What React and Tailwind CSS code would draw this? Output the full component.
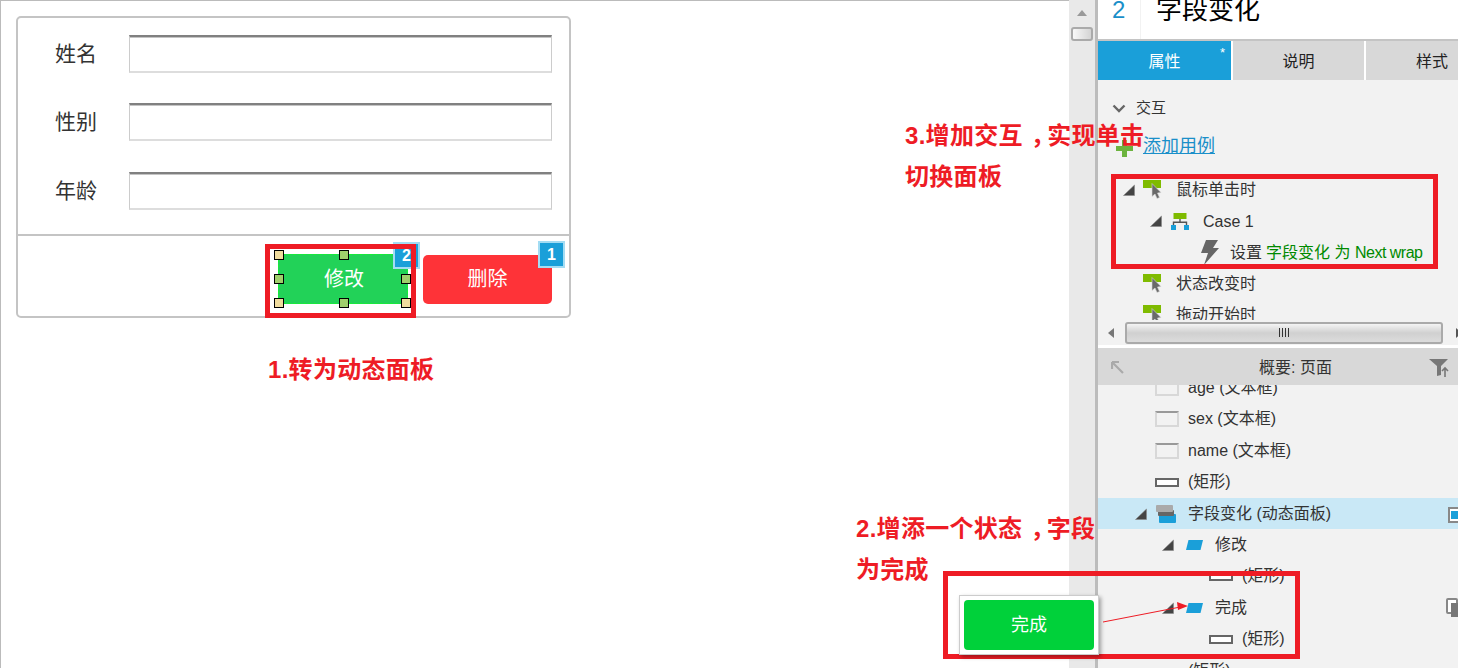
const font = { fontFamily: '"Liberation Sans","Noto Sans CJK SC",sans-serif' };

function Tri({ className = "" }) {
  return (
    <svg width="12" height="12" viewBox="0 0 12 12" className={"shrink-0 " + className}>
      <path d="M11.5 1 L11.5 11.5 L0.5 11.5 Z" fill="#444" stroke="#888" strokeWidth="0.6" />
    </svg>
  );
}
function EventIcon({ className = "" }) {
  return (
    <svg width="19" height="19" viewBox="0 0 19 19" className={"shrink-0 " + className}>
      <rect x="0" y="0" width="18" height="8" fill="#7fbb00" />
      <path d="M9 3.5L18 12.5L14.5 13L16.5 17.5L14 18.5L12 14L9 16.5Z" fill="#6a6a6a" stroke="#d8d8d8" strokeWidth="0.6" />
    </svg>
  );
}
function CaseIcon({ className = "" }) {
  return (
    <svg width="18" height="17" viewBox="0 0 18 17" className={"shrink-0 " + className}>
      <rect x="2.5" y="0" width="13" height="6" fill="#7fbb00" />
      <path d="M9 6V9M2.5 12V9.2H15.5V12" fill="none" stroke="#555" strokeWidth="1.4" />
      <rect x="0" y="12" width="5" height="5" fill="#1a9fd9" />
      <rect x="13" y="12" width="5" height="5" fill="#1a9fd9" />
    </svg>
  );
}
function Bolt({ className = "" }) {
  return (
    <svg width="20" height="25" viewBox="0 0 20 25" className={"shrink-0 " + className}>
      <path d="M6 0H18L13 8H19L4 25L8 13H1Z" fill="#666" />
    </svg>
  );
}
function TextBoxIcon({ faint }) {
  return (
    <div className={"w-[24px] h-[16px] shrink-0 border-2 bg-[#f2f2f2] " + (faint ? "border-[#d8d8d8]" : "border-[#d8d8d8] border-t-[#999]")} />
  );
}
function RectIcon() {
  return <div className="w-[24px] h-[9px] shrink-0 border-2 border-[#666] bg-white" />;
}
function StateIcon() {
  return (
    <svg width="17" height="10" viewBox="0 0 17 10" className="shrink-0">
      <path d="M2.5 0H17L14.5 10H0Z" fill="#1a9fd9" />
    </svg>
  );
}
function PanelIcon() {
  return (
    <svg width="20" height="18" viewBox="0 0 20 18" className="shrink-0">
      <rect x="3" y="9" width="17" height="9" rx="1" fill="#1a9fd9" />
      <rect x="2" y="5" width="16" height="6" rx="1" fill="#666" />
      <rect x="0" y="0" width="17" height="7" rx="1" fill="#aaa" />
    </svg>
  );
}

function Field({ label, className = "" }) {
  return (
    <div className={"flex items-center " + className}>
      <span className="w-[82px] pl-[8px] text-[21px] leading-[26px] text-[#333]">{label}</span>
      <div className="w-[423px] h-[38px] bg-white border border-[#ccc] border-b-2 border-b-[#ddd] border-t-2 border-t-[#808080] shadow-[inset_0_1px_0_#c4c4c4]" />
    </div>
  );
}

function Handle({ className }) {
  return <div className={"absolute w-[10px] h-[10px] border-[1.5px] border-black bg-[#a0cf6c] " + className} />;
}

function Badge({ n, className }) {
  return (
    <div className={"absolute w-[27px] h-[27px] bg-[#1a9fd9] border-2 border-[#a3dcf3] text-white font-bold text-[16px] leading-[23px] text-center " + className}>{n}</div>
  );
}

function Form() {
  return (
    <div className="w-[555px] h-[302px] rounded-[5px] border-2 border-[#c4c4c4] bg-white flex flex-col">
      <div className="h-[218px] border-b-2 border-[#c4c4c4] pl-[29px] pt-[17px]">
        <Field label="姓名" />
        <Field label="性别" className="mt-[30px]" />
        <Field label="年龄" className="mt-[31px]" />
      </div>
      <div className="flex-1 flex justify-end items-start pt-[18px] pr-[17px] gap-[15px]">
        <div className="relative w-[130px] h-[50px] bg-[#22d258] border border-dashed border-[#14f52e] text-white text-[20px] leading-[48px] text-center">
          <span className="ml-[2px]">修改</span>
          <Handle className="-left-[5px] -top-[5px] bg-[#f0dc9e]" />
          <Handle className="left-[60px] -top-[5px]" />
          <Handle className="-right-[4px] -top-[5px]" />
          <Handle className="-left-[5px] top-[19px]" />
          <Handle className="-right-[4px] top-[19px]" />
          <Handle className="-left-[5px] -bottom-[5px] bg-[#f0dc9e]" />
          <Handle className="left-[60px] -bottom-[5px]" />
          <Handle className="-right-[4px] -bottom-[5px] bg-[#f0dc9e]" />
          <Badge n="2" className="-top-[13px] -right-[13px]" />
        </div>
        <div className="relative w-[129px] h-[49px] mt-[1px] bg-[#fe3338] rounded-[5px] text-white text-[20px] leading-[49px] text-center">
          删除
          <Badge n="1" className="-top-[14px] -right-[13px]" />
        </div>
      </div>
    </div>
  );
}

function Tab({ active, w, children }) {
  return (
    <div className={"h-full relative shrink-0 text-[16px] pt-[2px] flex items-center justify-center " + w + " " + (active ? "bg-[#1a9fd9] text-white" : "bg-[#d8d8d8] text-[#222]")}>
      {children}
    </div>
  );
}

function EvRow({ pl, children, h = "h-[31px]" }) {
  return <div className={"flex items-center text-[16px] text-[#333] whitespace-nowrap " + h} style={{ paddingLeft: pl }}>{children}</div>;
}

function TreeRow({ pl, children, active }) {
  return (
    <div className={"h-[31.4px] shrink-0 flex items-center relative text-[16px] text-[#333] whitespace-nowrap " + (active ? "bg-[#c9e8f6]" : "")} style={{ paddingLeft: pl }}>
      {children}
    </div>
  );
}

function RedBox({ className }) {
  return <div className={"absolute border-[5px] border-[#ee1c25] pointer-events-none " + className} />;
}

function Note({ className, children }) {
  return <div className={"absolute text-[24px] font-bold leading-[32px] tracking-[0.3px] text-[#ee1c25] whitespace-nowrap " + className}>{children}</div>;
}

export default function App() {
  return (
    <div className="relative w-[1458px] h-[668px] overflow-hidden flex bg-white" style={font}>
      {/* canvas */}
      <div className="w-[1069px] h-full shrink-0 border-t border-l border-[#bbb] pl-[15px] pt-[15px]">
        <Form />
      </div>

      {/* vertical scrollbar */}
      <div className="w-[26px] h-full shrink-0 bg-[#e9e9e9] flex flex-col items-center pt-[10px]">
        <svg width="10" height="6" viewBox="0 0 10 6"><path d="M5 0L10 6H0Z" fill="#999" /></svg>
        <div className="mt-[11px] w-[22px] h-[14px] rounded-[3px] border-2 border-[#aaa] bg-gradient-to-r from-[#f8f8f8] to-[#d4d4d4]" />
      </div>
      <div className="w-[3px] h-full shrink-0 bg-[#bcbcbc]" />

      {/* right panel */}
      <div className="flex-1 min-w-0 h-full flex flex-col bg-[#f2f2f2] overflow-hidden">
        <div className="h-[39px] shrink-0 bg-white flex overflow-hidden">
          <div className="w-[43px] h-full border-r border-[#f2f2f2] pl-[14px] text-[24px] leading-[20px] text-[#1a8fc9]">2</div>
          <div className="pl-[15px] text-[26px] leading-[20px] text-black">字段变化</div>
        </div>
        <div className="h-[2px] shrink-0 bg-[#c4c4c4]" />
        <div className="h-[39px] shrink-0 flex gap-[2px] bg-white">
          <Tab active w="w-[133px]">
            属性
            <span className="absolute right-[6px] top-[4px] text-[13px] leading-[16px]">*</span>
          </Tab>
          <Tab w="w-[131px]">说明</Tab>
          <Tab w="w-[132px]">样式</Tab>
        </div>

        <div className="h-[240px] shrink-0 overflow-hidden">
          <div className="h-[56px] flex items-center pl-[14px] text-[15px] text-[#333]">
            <svg width="14" height="9" viewBox="0 0 14 9" className="mr-[10px]"><path d="M1.5 1.5L7 7L12.5 1.5" fill="none" stroke="#666" strokeWidth="2.4" /></svg>
            交互
          </div>
          <div className="h-[20px] flex items-center pl-[18px]">
            <svg width="17" height="17" viewBox="0 0 17 17" className="mr-[10px] mt-[4px]"><path d="M6 0H11V6H17V11H11V17H6V11H0V6H6Z" fill="#6cb33e" /></svg>
            <span className="-mt-[1px] text-[18px] leading-[22px] text-[#1a8fc9] underline">添加用例</span>
          </div>
          <div className="h-[18px]" />
          <EvRow pl={25}><Tri /><EventIcon className="ml-[8px] mr-[14px]" />鼠标单击时</EvRow>
          <EvRow pl={52} h="h-[32px]"><Tri /><CaseIcon className="ml-[9px] mr-[15px]" /><span className="mt-[1px] -ml-[1px]">Case 1</span></EvRow>
          <EvRow pl={102}><Bolt className="mr-[10px]" />设置 <span className="text-[#008a00] ml-[4px]">字段变化 为 <span className="tracking-[-0.5px]">Next wrap</span></span></EvRow>
          <EvRow pl={45}><EventIcon className="mr-[14px]" />状态改变时</EvRow>
          <EvRow pl={45}><EventIcon className="mr-[14px]" />拖动开始时</EvRow>
        </div>

        {/* horizontal scrollbar */}
        <div className="h-[25px] shrink-0 flex items-center pl-[10px] gap-[11px] overflow-hidden bg-[#f2f2f2]">
          <svg width="6" height="10" viewBox="0 0 6 10" className="shrink-0"><path d="M0 5L6 0V10Z" fill="#777" /></svg>
          <div className="w-[318px] h-[22px] shrink-0 rounded-[3px] border-2 border-[#aaa] bg-gradient-to-b from-[#f4f4f4] via-[#d0d0d0] to-[#dcdcdc] flex items-center justify-center gap-[2px]">
            <div className="w-[1px] h-[9px] bg-[#333]" /><div className="w-[1px] h-[9px] bg-[#333]" /><div className="w-[1px] h-[9px] bg-[#333]" /><div className="w-[1px] h-[9px] bg-[#333]" />
          </div>
          <svg width="6" height="10" viewBox="0 0 6 10" className="shrink-0 ml-[2px]"><path d="M6 5L0 0V10Z" fill="#555" /></svg>
        </div>
        <div className="h-[3px] shrink-0 bg-white" />

        {/* outline header */}
        <div className="h-[37px] shrink-0 bg-[#d8d8d8] flex items-center justify-between px-[13px] pt-[2px] relative z-10 text-[16px] text-[#333]">
          <svg width="13" height="13" viewBox="0 0 13 13"><path d="M1 1H8M1 1V8M1.5 1.5L12 12" fill="none" stroke="#aaa" strokeWidth="2.2" /></svg>
          <span className="ml-[38px]">概要: 页面</span>
          <svg width="22" height="18" viewBox="0 0 22 18" className="-mr-[6px]">
            <path d="M0 0H19L12 7V16L8 17V7Z" fill="#777" />
            <path d="M16 18V9M13 12L16 9L19 12" fill="none" stroke="#777" strokeWidth="1.6" />
          </svg>
        </div>

        {/* outline tree */}
        <div className="flex-1 min-h-0 overflow-hidden">
          <div className="-mt-[12.6px] flex flex-col">
            <TreeRow pl={57}><TextBoxIcon faint /><span className="ml-[9px]">age (文本框)</span></TreeRow>
            <TreeRow pl={57}><TextBoxIcon /><span className="ml-[9px]">sex (文本框)</span></TreeRow>
            <TreeRow pl={57}><TextBoxIcon /><span className="ml-[9px]">name (文本框)</span></TreeRow>
            <TreeRow pl={57}><RectIcon /><span className="ml-[9px]">(矩形)</span></TreeRow>
            <TreeRow pl={37} active>
              <Tri /><span className="ml-[9px]"><PanelIcon /></span><span className="ml-[12px]">字段变化 (动态面板)</span>
              <div className="absolute right-0 top-[9px] w-[10px] h-[16px] border-2 border-r-0 border-[#888] bg-white flex items-center pl-[1px]"><div className="w-[7px] h-[8px] bg-[#1a9fd9]" /></div>
            </TreeRow>
            <TreeRow pl={64}><Tri /><span className="w-[12px]" /><StateIcon /><span className="ml-[12px]">修改</span></TreeRow>
            <TreeRow pl={111}><RectIcon /><span className="ml-[9px]">(矩形)</span></TreeRow>
            <TreeRow pl={64}>
              <Tri /><span className="w-[12px]" /><StateIcon /><span className="ml-[12px]">完成</span>
              <div className="absolute right-0 top-[6px] w-[12px] h-[16px] rounded-[2px] border-2 border-[#888] bg-white"><div className="ml-[3px] mt-[3px] w-[9px] h-[14px] bg-[#777]" /></div>
            </TreeRow>
            <TreeRow pl={111}><RectIcon /><span className="ml-[9px]">(矩形)</span></TreeRow>
            <TreeRow pl={57}><Tri className="mt-[8px]" /><span className="ml-[21px]">(矩形)</span></TreeRow>
          </div>
        </div>
      </div>

      {/* annotations */}
      <RedBox className="left-[265px] top-[244px] w-[151px] h-[74px]" />
      <RedBox className="left-[1111px] top-[174px] w-[327px] h-[95px]" />
      <RedBox className="left-[943px] top-[571px] w-[357px] h-[88px]" />

      <Note className="left-[268px] top-[354px]">1.转为动态面板</Note>
      <Note className="left-[905px] top-[120px]">3.增加交互<span className="relative left-[8px]">，</span>实现单击</Note>
      <Note className="left-[905px] top-[161px]">切换面板</Note>
      <Note className="left-[856px] top-[513px]">2.增添一个状态<span className="relative left-[8px]">，</span>字段</Note>
      <Note className="left-[856px] top-[554px]">为完成</Note>

      <div className="absolute left-[959px] top-[595px] w-[140px] h-[60px] bg-white border border-[#ccc] shadow-[2px_2px_4px_rgba(0,0,0,0.35)] p-[4px]">
        <div className="w-full h-full rounded-[4px] bg-[#00d13a] text-white text-[18px] leading-[50px] text-center">完成</div>
      </div>
      <svg width="100" height="30" viewBox="0 0 100 30" className="absolute left-[1098px] top-[600px]">
        <path d="M5 22L85 6.5" fill="none" stroke="#ee1c25" strokeWidth="1" />
        <path d="M90 6L79 2L80 10Z" fill="#ee1c25" />
      </svg>
    </div>
  );
}
